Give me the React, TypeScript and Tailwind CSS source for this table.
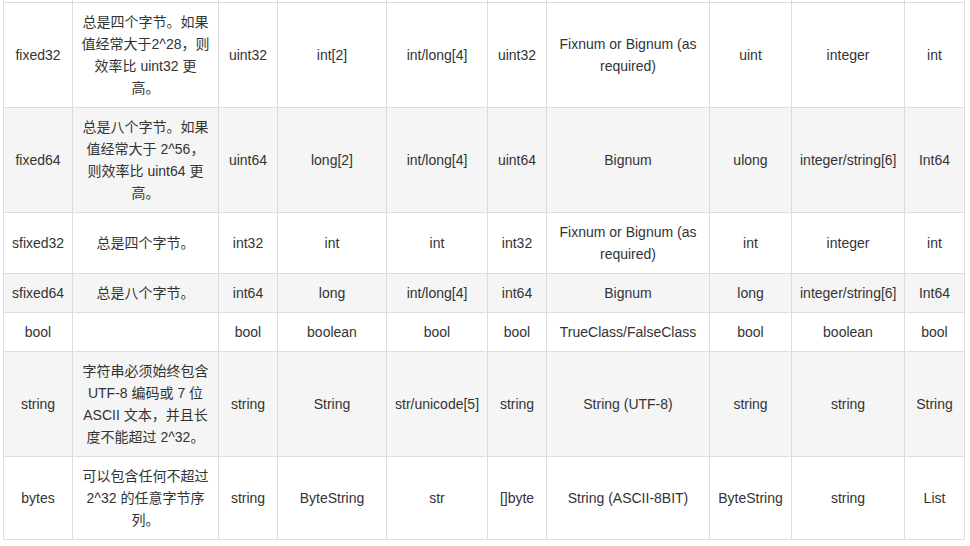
const columns = [69, 146, 59, 109, 101, 59, 163, 82, 113, 60];

const rows: string[][] = [
  ['fixed32', '总是四个字节。如果值经常大于2^28，则效率比 uint32 更高。', 'uint32', 'int[2]', 'int/long[4]', 'uint32', 'Fixnum or Bignum (as required)', 'uint', 'integer', 'int'],
  ['fixed64', '总是八个字节。如果值经常大于 2^56，则效率比 uint64 更高。', 'uint64', 'long[2]', 'int/long[4]', 'uint64', 'Bignum', 'ulong', 'integer/string[6]', 'Int64'],
  ['sfixed32', '总是四个字节。', 'int32', 'int', 'int', 'int32', 'Fixnum or Bignum (as required)', 'int', 'integer', 'int'],
  ['sfixed64', '总是八个字节。', 'int64', 'long', 'int/long[4]', 'int64', 'Bignum', 'long', 'integer/string[6]', 'Int64'],
  ['bool', '', 'bool', 'boolean', 'bool', 'bool', 'TrueClass/FalseClass', 'bool', 'boolean', 'bool'],
  ['string', '字符串必须始终包含 UTF-8 编码或 7 位 ASCII 文本，并且长度不能超过 2^32。', 'string', 'String', 'str/unicode[5]', 'string', 'String (UTF-8)', 'string', 'string', 'String'],
  ['bytes', '可以包含任何不超过 2^32 的任意字节序列。', 'string', 'ByteString', 'str', '[]byte', 'String (ASCII-8BIT)', 'ByteString', 'string', 'List'],
];

export default function App() {
  return (
    <div className="h-[546px] w-[970px] overflow-hidden bg-white pl-[3px]">
      <table
        className="w-[962px] table-fixed border-collapse text-center text-[14px] leading-[22px] text-[#333]"
        style={{ fontFamily: '"Liberation Sans", Arial, "Noto Sans CJK SC", sans-serif' }}
      >
        <colgroup>
          {columns.map((w, i) => (
            <col key={i} style={{ width: w }} />
          ))}
        </colgroup>
        <tbody>
          <tr>
            {columns.map((_, i) => (
              <td key={i} className="h-[2px] border border-t-0 border-[#ddd] p-0" />
            ))}
          </tr>
          {rows.map((row, r) => (
            <tr key={row[0]} className={r % 2 === 1 ? 'bg-[#f5f5f5]' : 'bg-white'}>
              {row.map((cell, c) => (
                <td key={c} className="border border-[#ddd] px-2 py-2 align-middle">
                  {cell}
                </td>
              ))}
            </tr>
          ))}
        </tbody>
      </table>
    </div>
  );
}
